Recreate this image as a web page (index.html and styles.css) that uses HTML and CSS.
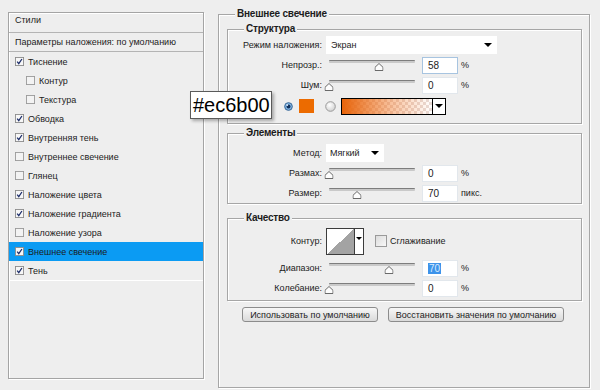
FILE: index.html
```html
<!DOCTYPE html>
<html lang="ru">
<head>
<meta charset="utf-8">
<link rel="stylesheet" href="styles.css">
</head>
<body>
<div class="dialog">
  <div class="panel">
    <div class="head">Стили</div>
    <div class="params">Параметры наложения: по умолчанию</div>
    <div class="item"><svg class="cb" viewBox="0 0 10 10"><rect x=".5" y=".5" width="9" height="9" fill="#f7f7f7" stroke="#8c8c8c"/><path d="M2.4 5.1 L4.2 7.4 L7.7 2.2" fill="none" stroke="#1c2d6a" stroke-width="1.4"/></svg>Тиснение</div>
    <div class="item sub"><svg class="cb" viewBox="0 0 10 10"><rect x=".5" y=".5" width="9" height="9" fill="#f3f3f3" stroke="#9a9a9a"/></svg>Контур</div>
    <div class="item sub"><svg class="cb" viewBox="0 0 10 10"><rect x=".5" y=".5" width="9" height="9" fill="#f3f3f3" stroke="#9a9a9a"/></svg>Текстура</div>
    <div class="item"><svg class="cb" viewBox="0 0 10 10"><rect x=".5" y=".5" width="9" height="9" fill="#f7f7f7" stroke="#8c8c8c"/><path d="M2.4 5.1 L4.2 7.4 L7.7 2.2" fill="none" stroke="#1c2d6a" stroke-width="1.4"/></svg>Обводка</div>
    <div class="item"><svg class="cb" viewBox="0 0 10 10"><rect x=".5" y=".5" width="9" height="9" fill="#f7f7f7" stroke="#8c8c8c"/><path d="M2.4 5.1 L4.2 7.4 L7.7 2.2" fill="none" stroke="#1c2d6a" stroke-width="1.4"/></svg>Внутренняя тень</div>
    <div class="item"><svg class="cb" viewBox="0 0 10 10"><rect x=".5" y=".5" width="9" height="9" fill="#f3f3f3" stroke="#9a9a9a"/></svg>Внутреннее свечение</div>
    <div class="item"><svg class="cb" viewBox="0 0 10 10"><rect x=".5" y=".5" width="9" height="9" fill="#f3f3f3" stroke="#9a9a9a"/></svg>Глянец</div>
    <div class="item"><svg class="cb" viewBox="0 0 10 10"><rect x=".5" y=".5" width="9" height="9" fill="#f7f7f7" stroke="#8c8c8c"/><path d="M2.4 5.1 L4.2 7.4 L7.7 2.2" fill="none" stroke="#1c2d6a" stroke-width="1.4"/></svg>Наложение цвета</div>
    <div class="item"><svg class="cb" viewBox="0 0 10 10"><rect x=".5" y=".5" width="9" height="9" fill="#f7f7f7" stroke="#8c8c8c"/><path d="M2.4 5.1 L4.2 7.4 L7.7 2.2" fill="none" stroke="#1c2d6a" stroke-width="1.4"/></svg>Наложение градиента</div>
    <div class="item"><svg class="cb" viewBox="0 0 10 10"><rect x=".5" y=".5" width="9" height="9" fill="#f3f3f3" stroke="#9a9a9a"/></svg>Наложение узора</div>
    <div class="item selected"><svg class="cb" viewBox="0 0 10 10"><rect x=".5" y=".5" width="9" height="9" fill="#f7f7f7" stroke="#8c8c8c"/><path d="M2.4 5.1 L4.2 7.4 L7.7 2.2" fill="none" stroke="#1c2d6a" stroke-width="1.4"/></svg>Внешнее свечение</div>
    <div class="item last"><svg class="cb" viewBox="0 0 10 10"><rect x=".5" y=".5" width="9" height="9" fill="#f7f7f7" stroke="#8c8c8c"/><path d="M2.4 5.1 L4.2 7.4 L7.7 2.2" fill="none" stroke="#1c2d6a" stroke-width="1.4"/></svg>Тень</div>
  </div>

  <fieldset class="outer">
    <legend class="title">Внешнее свечение</legend>

    <fieldset class="group g-struct">
      <legend class="gtitle">Структура</legend>
      <div class="row">
        <span class="lbl">Режим наложения:</span>
        <div class="select wide"><span>Экран</span><i class="arrow"></i></div>
      </div>
      <div class="row">
        <span class="lbl">Непрозр.:</span>
        <div class="slider"><div class="track"></div><svg class="thumb" style="left:58%" viewBox="0 0 9 8"><path d="M4.5 .5 L8.5 4.3 L8.5 7.5 L.5 7.5 L.5 4.3 Z" fill="#fdfdfd" stroke="#6a6a6a"/></svg></div>
        <div class="num focus">58</div><span class="unit">%</span>
      </div>
      <div class="row">
        <span class="lbl">Шум:</span>
        <div class="slider"><div class="track"></div><svg class="thumb" style="left:0%" viewBox="0 0 9 8"><path d="M4.5 .5 L8.5 4.3 L8.5 7.5 L.5 7.5 L.5 4.3 Z" fill="#fdfdfd" stroke="#6a6a6a"/></svg></div>
        <div class="num">0</div><span class="unit">%</span>
      </div>
      <div class="row color-row">
        <svg class="radio" viewBox="0 0 10 10"><circle cx="5" cy="5" r="4.3" fill="#7fb2e0" stroke="#2f5f8f"/><circle cx="5" cy="5" r="2.2" fill="#0f2f5a"/><circle cx="3.6" cy="3.4" r="1" fill="#e6f2ff"/></svg>
        <span class="swatch"></span>
        <svg class="radio2" viewBox="0 0 11 11"><defs><radialGradient id="rg" cx="40%" cy="35%" r="70%"><stop offset="0" stop-color="#ffffff"/><stop offset="1" stop-color="#cfcfcf"/></radialGradient></defs><circle cx="5.5" cy="5.5" r="4.8" fill="url(#rg)" stroke="#9a9a9a"/></svg>
        <div class="grad"><span class="grad-fill"></span><span class="grad-btn"><i class="arrow"></i></span></div>
      </div>
    </fieldset>

    <fieldset class="group g-elem">
      <legend class="gtitle">Элементы</legend>
      <div class="row">
        <span class="lbl">Метод:</span>
        <div class="select narrow"><span>Мягкий</span><i class="arrow"></i></div>
      </div>
      <div class="row">
        <span class="lbl">Размах:</span>
        <div class="slider"><div class="track"></div><svg class="thumb" style="left:0%" viewBox="0 0 9 8"><path d="M4.5 .5 L8.5 4.3 L8.5 7.5 L.5 7.5 L.5 4.3 Z" fill="#fdfdfd" stroke="#6a6a6a"/></svg></div>
        <div class="num">0</div><span class="unit">%</span>
      </div>
      <div class="row">
        <span class="lbl">Размер:</span>
        <div class="slider"><div class="track"></div><svg class="thumb" style="left:33%" viewBox="0 0 9 8"><path d="M4.5 .5 L8.5 4.3 L8.5 7.5 L.5 7.5 L.5 4.3 Z" fill="#fdfdfd" stroke="#6a6a6a"/></svg></div>
        <div class="num">70</div><span class="unit">пикс.</span>
      </div>
    </fieldset>

    <fieldset class="group g-qual">
      <legend class="gtitle">Качество</legend>
      <div class="row contour-row">
        <span class="lbl">Контур:</span>
        <div class="contour"><span class="contour-img"></span><span class="contour-btn"><i class="arrow small"></i></span></div>
        <span class="box"></span><span class="box-lbl">Сглаживание</span>
      </div>
      <div class="row r-range">
        <span class="lbl">Диапазон:</span>
        <div class="slider"><div class="track"></div><svg class="thumb" style="left:70%" viewBox="0 0 9 8"><path d="M4.5 .5 L8.5 4.3 L8.5 7.5 L.5 7.5 L.5 4.3 Z" fill="#fdfdfd" stroke="#6a6a6a"/></svg></div>
        <div class="num"><span class="sel">70</span></div><span class="unit">%</span>
      </div>
      <div class="row">
        <span class="lbl">Колебание:</span>
        <div class="slider"><div class="track"></div><svg class="thumb" style="left:0%" viewBox="0 0 9 8"><path d="M4.5 .5 L8.5 4.3 L8.5 7.5 L.5 7.5 L.5 4.3 Z" fill="#fdfdfd" stroke="#6a6a6a"/></svg></div>
        <div class="num">0</div><span class="unit">%</span>
      </div>
    </fieldset>

    <div class="buttons">
      <button class="btn b1">Использовать по умолчанию</button>
      <button class="btn b2">Восстановить значения по умолчанию</button>
    </div>
  </fieldset>

  <div class="tooltip">#ec6b00</div>
</div>
</body>
</html>
```

FILE: styles.css
```css
* { box-sizing: border-box; }
html, body {
  margin: 0;
  padding: 0;
  background: #eeeeee;
}
body {
  width: 600px;
  height: 390px;
  overflow: hidden;
  font-family: "Liberation Sans", Arial, sans-serif;
  font-size: 9px;
  color: #1c1c1c;
}
.dialog {
  position: relative;
  display: flex;
  align-items: flex-start;
  gap: 14px;
  padding: 8px 0 0 8px;
}

/* left styles list */
.panel {
  width: 196px;
  height: 367px;
  margin-top: 4px;
  border: 1px solid #a4a4a4;
  box-shadow: inset 1px 1px 0 #ffffff, 1px 1px 0 #ffffff;
  display: flex;
  flex-direction: column;
}
.head {
  height: 20px;
  line-height: 15px;
  padding-left: 6px;
  border-bottom: 1px solid #b4b4b4;
}
.params {
  height: 19px;
  line-height: 18px;
  padding-left: 6px;
  border-bottom: 1px solid #b4b4b4;
}
.item {
  height: 19px;
  display: flex;
  align-items: center;
  padding-left: 6px;
}
.item.sub { padding-left: 17px; }
.item.selected { background: #0b9bf3; }
.item.last { border-bottom: 1px solid #ffffff; height: 20px; }
.cb {
  width: 9px;
  height: 9px;
  margin-right: 4px;
  flex: none;
}

/* right side */
fieldset {
  margin: 0;
  min-width: 0;
}
.outer {
  width: 372px;
  height: 380px;
  padding: 3px 7px 0 8px;
  border: 1px solid #a6a6a6;
  box-shadow: inset 1px 1px 0 #ffffff, 1px 1px 0 #ffffff;
}
.title {
  font-weight: bold;
  font-size: 10px;
  letter-spacing: -0.2px;
  padding: 0 2px;
  margin-left: 8px;
  line-height: 12px;
  background: #eeeeee;
}
.group {
  width: 355px;
  border: 1px solid #a6a6a6;
  box-shadow: inset 1px 1px 0 #ffffff, 1px 1px 0 #ffffff;
  padding: 0;
}
.gtitle {
  font-weight: bold;
  font-size: 10px;
  letter-spacing: -0.2px;
  padding: 0 2px;
  margin-left: 16px;
  line-height: 12px;
  background: #eeeeee;
}
.g-struct { padding-bottom: 6px; }
.g-elem { margin-top: 3px; padding-top: 4px; }
.g-qual { margin-top: 8px; padding-top: 2px; padding-bottom: 2px; }

.row {
  display: flex;
  align-items: center;
  height: 20px;
}
.lbl {
  width: 94px;
  margin-right: 4px;
  text-align: right;
  flex: none;
  white-space: nowrap;
}
.select {
  height: 18px;
  background: #ffffff;
  display: flex;
  align-items: center;
  justify-content: space-between;
  padding: 0 5px 0 5px;
}
.select.wide { width: 171px; }
.select.narrow { width: 58px; padding-left: 4px; }
.arrow {
  display: block;
  width: 0;
  height: 0;
  border-left: 4px solid transparent;
  border-right: 4px solid transparent;
  border-top: 4px solid #000000;
}
.arrow.small {
  border-left-width: 3px;
  border-right-width: 3px;
  border-top-width: 3px;
}

.slider {
  position: relative;
  width: 86px;
  height: 14px;
  margin-left: 3px;
  flex: none;
}
.track {
  position: absolute;
  left: 0;
  right: 0;
  top: 2px;
  height: 3px;
  background: #c9c9c9;
  border-top: 1px solid #7d7d7d;
  border-radius: 1px;
}
.thumb {
  position: absolute;
  top: 5px;
  width: 9px;
  height: 8px;
  transform: translateX(-50%);
}
.num {
  width: 36px;
  height: 17px;
  margin-left: 7px;
  background: #ffffff;
  border: 1px solid #e2e7ec;
  padding-left: 5px;
  line-height: 15px;
  font-size: 10px;
  flex: none;
}
.num.focus { border-color: #a7c4e0; }
.sel {
  background: #3d93ea;
  color: #d8ecff;
  padding: 0 1px;
}
.unit { margin-left: 3px; }

.color-row {
  height: 22px;
  padding-left: 56px;
}
.radio {
  width: 9px;
  height: 9px;
  flex: none;
}
.swatch {
  width: 15px;
  height: 14px;
  margin-left: 6px;
  background: #ec6b00;
  flex: none;
}
.radio2 {
  width: 11px;
  height: 11px;
  margin-left: 11px;
  flex: none;
}
.grad {
  display: flex;
  width: 105px;
  height: 17px;
  margin-left: 5px;
  border: 1px solid #000000;
  flex: none;
}
.grad-fill {
  flex: 1;
  background:
    linear-gradient(to right, #e8640a 0%, rgba(240, 120, 40, 0.45) 55%, rgba(240, 140, 100, 0) 100%),
    repeating-conic-gradient(#ffffff 0 25%, #e9dcd8 0 50%) 0 0 / 6px 6px;
}
.grad-btn {
  width: 13px;
  border-left: 1px solid #000000;
  background: #ffffff;
  display: flex;
  align-items: center;
  justify-content: center;
}

.contour-row { height: 30px; }
.contour {
  display: flex;
  height: 27px;
  border: 1px solid #3c3c3c;
  flex: none;
}
.contour-img {
  width: 27px;
  background: linear-gradient(to bottom right, #ffffff 50%, #a3a3a3 50%);
}
.contour-btn {
  width: 9px;
  border-left: 1px solid #3c3c3c;
  background: #ffffff;
  display: flex;
  justify-content: center;
  padding-top: 8px;
}
.box {
  width: 12px;
  height: 12px;
  margin-left: 11px;
  border: 1px solid #9a9a9a;
  background: linear-gradient(135deg, #dcdcdc, #f8f8f8);
  flex: none;
}
.box-lbl { margin-left: 3px; }
.r-range { margin-top: 2px; }

.buttons {
  display: flex;
  gap: 10px;
  padding-left: 15px;
  margin-top: 6px;
}
.btn {
  height: 15px;
  padding: 0;
  font-family: inherit;
  font-size: 9px;
  white-space: nowrap;
  color: #1c1c1c;
  background: linear-gradient(#f7f7f7, #dadada);
  border: 1px solid #8c8c8c;
  border-radius: 3px;
  line-height: 12px;
}
.b1 { width: 136px; }
.b2 { width: 176px; }

.tooltip {
  position: absolute;
  left: 190px;
  top: 91px;
  width: 82px;
  height: 28px;
  background: #ffffff;
  border: 1px solid #5a5a5a;
  box-shadow: 2px 2px 3px rgba(0, 0, 0, 0.3);
  font-size: 20px;
  line-height: 26px;
  padding-left: 2px;
  color: #000000;
}
```
